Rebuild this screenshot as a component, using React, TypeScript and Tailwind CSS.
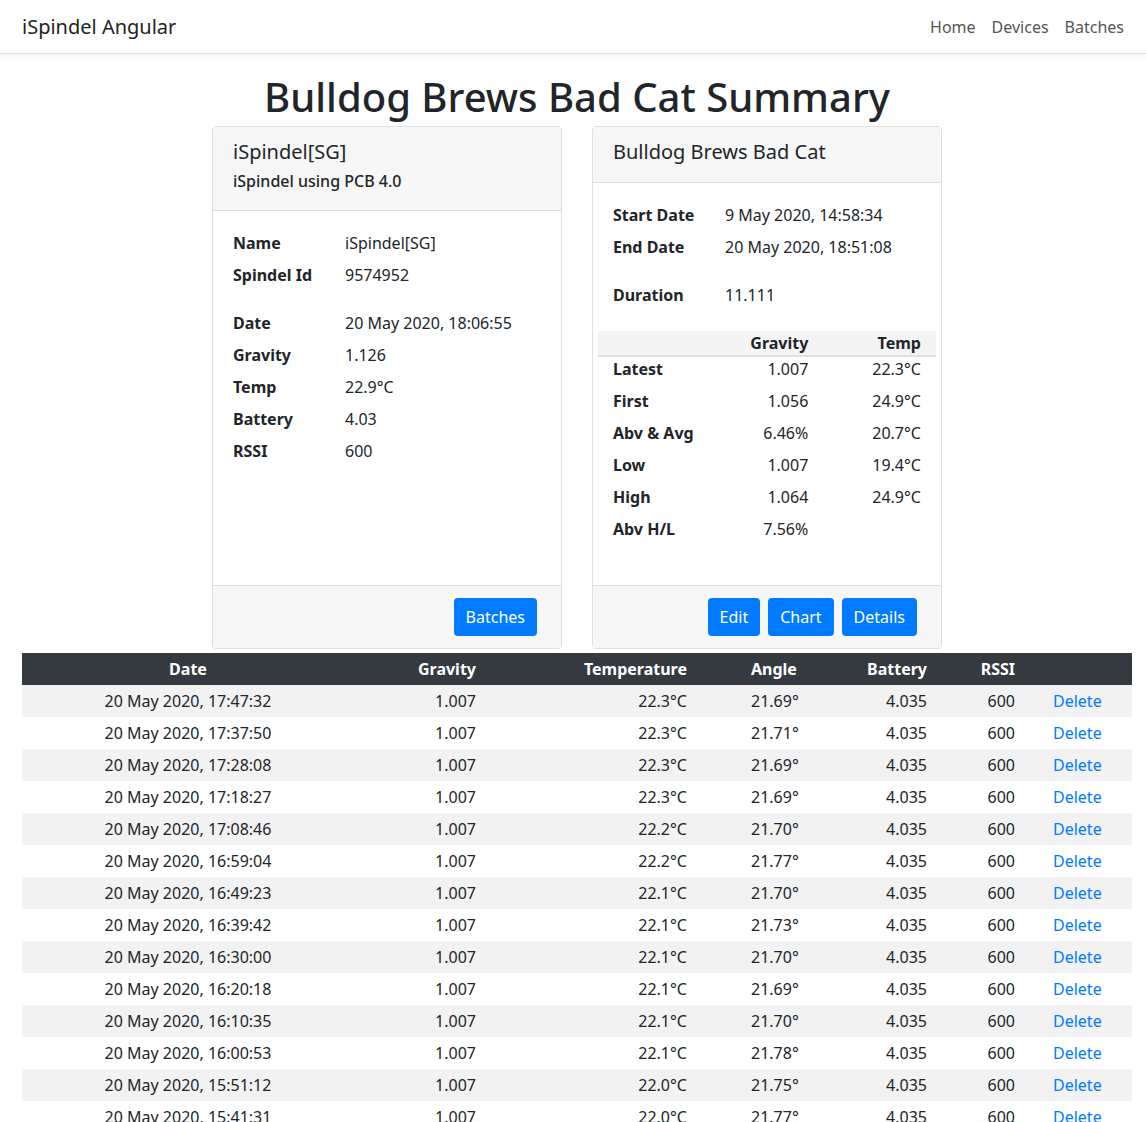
import React from "react";

const font = { fontFamily: '"Noto Sans", "Open Sans", sans-serif' };

type Reading = { date: string; temp: string; angle: string };

const readings: Reading[] = [
  { date: "20 May 2020, 17:47:32", temp: "22.3°C", angle: "21.69°" },
  { date: "20 May 2020, 17:37:50", temp: "22.3°C", angle: "21.71°" },
  { date: "20 May 2020, 17:28:08", temp: "22.3°C", angle: "21.69°" },
  { date: "20 May 2020, 17:18:27", temp: "22.3°C", angle: "21.69°" },
  { date: "20 May 2020, 17:08:46", temp: "22.2°C", angle: "21.70°" },
  { date: "20 May 2020, 16:59:04", temp: "22.2°C", angle: "21.77°" },
  { date: "20 May 2020, 16:49:23", temp: "22.1°C", angle: "21.70°" },
  { date: "20 May 2020, 16:39:42", temp: "22.1°C", angle: "21.73°" },
  { date: "20 May 2020, 16:30:00", temp: "22.1°C", angle: "21.70°" },
  { date: "20 May 2020, 16:20:18", temp: "22.1°C", angle: "21.69°" },
  { date: "20 May 2020, 16:10:35", temp: "22.1°C", angle: "21.70°" },
  { date: "20 May 2020, 16:00:53", temp: "22.1°C", angle: "21.78°" },
  { date: "20 May 2020, 15:51:12", temp: "22.0°C", angle: "21.75°" },
  { date: "20 May 2020, 15:41:31", temp: "22.0°C", angle: "21.77°" },
  { date: "20 May 2020, 15:31:49", temp: "22.0°C", angle: "21.74°" },
  { date: "20 May 2020, 15:22:08", temp: "22.0°C", angle: "21.72°" },
];

const summary = [
  { label: "Latest", gravity: "1.007", temp: "22.3°C" },
  { label: "First", gravity: "1.056", temp: "24.9°C" },
  { label: "Abv & Avg", gravity: "6.46%", temp: "20.7°C" },
  { label: "Low", gravity: "1.007", temp: "19.4°C" },
  { label: "High", gravity: "1.064", temp: "24.9°C" },
  { label: "Abv H/L", gravity: "7.56%", temp: "" },
];

// label / value pair, 32px per line like the bootstrap dl rows
const Row = ({ label, value, className = "mt-0" }: { label: string; value: string; className?: string }) => (
  <div className={`flex leading-6 mb-2 ${className}`}>
    <div className="w-[112px] font-bold">{label}</div>
    <div>{value}</div>
  </div>
);

const Button = ({ children }: { children: React.ReactNode }) => (
  <button className="h-[38px] rounded bg-[#007bff] px-3 text-white">{children}</button>
);

const cols =
  "grid grid-cols-[332px_128px_211px_140px_100px_88px_111px] h-8 items-center";

export default function App() {
  return (
    <div className="min-h-screen bg-white text-base text-[#212529]" style={font}>
      <nav className="flex h-[54px] items-center justify-between border-b border-[#dee2e6] pl-[22px] pr-[14px] shadow-[0_2px_6px_rgba(0,0,0,0.06)]">
        <span className="text-xl text-[#222]">iSpindel Angular</span>
        <div className="flex text-[#555]">
          <a className="px-2">Home</a>
          <a className="px-2">Devices</a>
          <a className="px-2">Batches</a>
        </div>
      </nav>

      <h1 className="mt-[19px] mb-[5px] pl-2 text-center text-[40px] font-medium leading-[48px]">
        Bulldog Brews Bad Cat Summary
      </h1>

      <div className="flex justify-center gap-[30px] pl-2">
        <div className="flex w-[350px] flex-col rounded border border-[#dfdfdf]">
          <div className="border-b border-[#dfdfdf] bg-[#f7f7f7] px-5 pt-3 pb-[17px]">
            <div className="text-xl leading-[26px]">iSpindel[SG]</div>
            <div className="mt-1 font-medium leading-6">iSpindel using PCB 4.0</div>
          </div>
          <div className="px-5 py-5">
            <Row label="Name" value="iSpindel[SG]" />
            <Row label="Spindel Id" value="9574952" />
            <Row label="Date" value="20 May 2020, 18:06:55" className="mt-6" />
            <Row label="Gravity" value="1.126" />
            <Row label="Temp" value="22.9°C" />
            <Row label="Battery" value="4.03" />
            <Row label="RSSI" value="600" />
          </div>
          <div className="mt-auto flex justify-end border-t border-[#dfdfdf] bg-[#f7f7f7] py-3 pr-6">
            <Button>Batches</Button>
          </div>
        </div>

        <div className="flex w-[350px] flex-col rounded border border-[#dfdfdf]">
          <div className="border-b border-[#dfdfdf] bg-[#f7f7f7] px-5 pt-3 pb-[17px]">
            <div className="text-xl leading-[26px]">Bulldog Brews Bad Cat</div>
          </div>
          <div className="px-5 pt-5 pb-[36px]">
            <Row label="Start Date" value="9 May 2020, 14:58:34" />
            <Row label="End Date" value="20 May 2020, 18:51:08" />
            <Row label="Duration" value="11.111" className="mt-6" />
            <div className="mt-6 -mx-[15px]">
              <div className="grid h-[26px] grid-cols-3 items-center border-b-2 border-[#dee2e6] bg-[#f4f4f4] font-bold">
                <div />
                <div className="px-[15px] text-right">Gravity</div>
                <div className="px-[15px] text-right">Temp</div>
              </div>
              {summary.map((s) => (
                <div key={s.label} className="grid grid-cols-3 pb-2 leading-6">
                  <div className="px-[15px] font-bold">{s.label}</div>
                  <div className="px-[15px] text-right">{s.gravity}</div>
                  <div className="px-[15px] text-right">{s.temp}</div>
                </div>
              ))}
            </div>
          </div>
          <div className="mt-auto flex justify-end gap-2 border-t border-[#dfdfdf] bg-[#f7f7f7] py-3 pr-6">
            <Button>Edit</Button>
            <Button>Chart</Button>
            <Button>Details</Button>
          </div>
        </div>
      </div>

      <div className="mt-1 ml-[22px] w-[1110px]">
        <div className={`${cols} bg-[#343a40] font-bold text-white`}>
          <div className="text-center">Date</div>
          <div className="pr-[6px] text-right">Gravity</div>
          <div className="pr-[6px] text-right">Temperature</div>
          <div className="pl-[58px]">Angle</div>
          <div className="pr-[6px] text-right">Battery</div>
          <div className="pr-[6px] text-right">RSSI</div>
          <div />
        </div>
        {readings.map((r, i) => (
          <div key={r.date} className={`${cols} ${i % 2 === 0 ? "bg-[#f2f2f2]" : "bg-white"}`}>
            <div className="text-center">{r.date}</div>
            <div className="pr-[6px] text-right">1.007</div>
            <div className="pr-[6px] text-right">{r.temp}</div>
            <div className="pl-[58px]">{r.angle}</div>
            <div className="pr-[6px] text-right">4.035</div>
            <div className="pr-[6px] text-right">600</div>
            <a className="pl-8 text-[#007bff]">Delete</a>
          </div>
        ))}
      </div>
    </div>
  );
}
